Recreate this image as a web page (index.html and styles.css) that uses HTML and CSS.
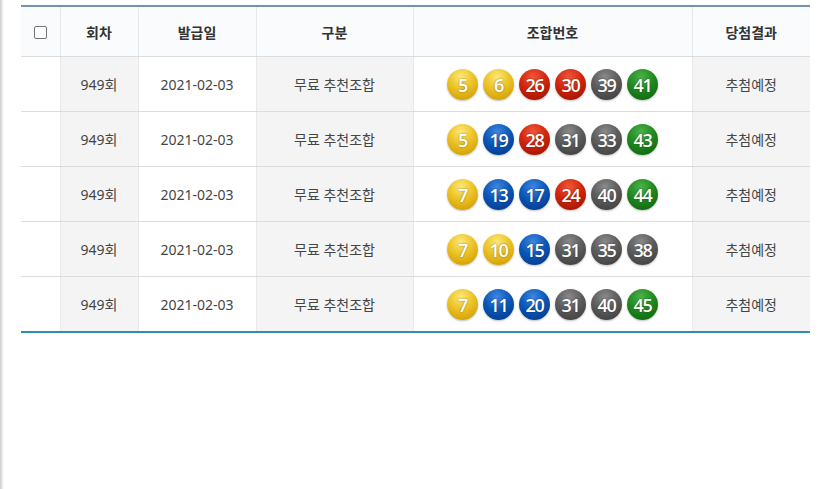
FILE: index.html
```html
<!DOCTYPE html>
<html lang="ko">
<head>
<meta charset="utf-8">
<link rel="stylesheet" href="styles.css">
</head>
<body>
<div class="frame">
  <table class="lotto">
    <colgroup>
      <col class="c-chk"><col class="c-round"><col class="c-date"><col class="c-type"><col class="c-nums"><col class="c-res">
    </colgroup>
    <thead>
      <tr>
        <th><span class="chk"></span></th>
        <th>회차</th>
        <th>발급일</th>
        <th>구분</th>
        <th>조합번호</th>
        <th>당첨결과</th>
      </tr>
    </thead>
    <tbody>
      <tr>
        <td></td><td class="g">949회</td><td>2021-02-03</td><td class="g">무료 추천조합</td>
        <td><div class="balls"><span class="ball y">5</span><span class="ball y">6</span><span class="ball r">26</span><span class="ball r">30</span><span class="ball k">39</span><span class="ball n">41</span></div></td>
        <td class="g">추첨예정</td>
      </tr>
      <tr>
        <td></td><td class="g">949회</td><td>2021-02-03</td><td class="g">무료 추천조합</td>
        <td><div class="balls"><span class="ball y">5</span><span class="ball b">19</span><span class="ball r">28</span><span class="ball k">31</span><span class="ball k">33</span><span class="ball n">43</span></div></td>
        <td class="g">추첨예정</td>
      </tr>
      <tr>
        <td></td><td class="g">949회</td><td>2021-02-03</td><td class="g">무료 추천조합</td>
        <td><div class="balls"><span class="ball y">7</span><span class="ball b">13</span><span class="ball b">17</span><span class="ball r">24</span><span class="ball k">40</span><span class="ball n">44</span></div></td>
        <td class="g">추첨예정</td>
      </tr>
      <tr>
        <td></td><td class="g">949회</td><td>2021-02-03</td><td class="g">무료 추천조합</td>
        <td><div class="balls"><span class="ball y">7</span><span class="ball y">10</span><span class="ball b">15</span><span class="ball k">31</span><span class="ball k">35</span><span class="ball k">38</span></div></td>
        <td class="g">추첨예정</td>
      </tr>
      <tr>
        <td></td><td class="g">949회</td><td>2021-02-03</td><td class="g">무료 추천조합</td>
        <td><div class="balls"><span class="ball y">7</span><span class="ball b">11</span><span class="ball b">20</span><span class="ball k">31</span><span class="ball k">40</span><span class="ball n">45</span></div></td>
        <td class="g">추첨예정</td>
      </tr>
    </tbody>
  </table>
</div>
</body>
</html>
```
FILE: styles.css
```css
html, body {
  margin: 0;
  padding: 0;
  height: 100%;
}
body {
  background: linear-gradient(to right, #cfcfcf 0, #e4e4e4 2px, #f6f6f6 3px, #ffffff 4px);
  font-family: "Noto Sans", "Noto Sans CJK KR", sans-serif;
  color: #444;
}
.frame {
  padding: 5px 17px 0 21px;
}
.lotto {
  width: 789px;
  border-collapse: collapse;
  table-layout: fixed;
  border-top: 2px solid #7491b1;
  border-bottom: 2px solid #2f8db5;
  font-size: 14px;
}
.c-chk { width: 39px; }
.c-round { width: 78px; }
.c-date { width: 118px; }
.c-type { width: 157px; }
.c-nums { width: 279px; }
.c-res { width: 118px; }

.lotto th {
  height: 49px;
  padding: 0;
  background: #f9fbfd;
  color: #333;
  font-weight: 700;
  font-family: "Noto Sans CJK KR", sans-serif;
  text-align: center;
  border-left: 1px solid #e6e9ec;
  border-bottom: 1px solid #dcdcdc;
}
.lotto th:first-child { border-left: none; }
.lotto td {
  height: 54px;
  padding: 0;
  text-align: center;
  border-left: 1px solid #e9e9e9;
  border-bottom: 1px solid #dcdcdc;
  background: #fff;
  color: #454545;
}
.lotto td:first-child { border-left: none; }
.lotto td.g { background: #f4f4f4; }

.chk {
  display: inline-block;
  width: 11px;
  height: 11px;
  border: 1px solid #767676;
  border-radius: 2px;
  background: #fff;
  vertical-align: middle;
  position: relative;
  top: -1px;
}

.balls {
  display: flex;
  justify-content: center;
  gap: 5px;
  padding-top: 1px;
}
.ball {
  width: 31px;
  height: 31px;
  border-radius: 50%;
  display: flex;
  align-items: center;
  justify-content: center;
  color: #fff;
  font-family: "Open Sans", "Liberation Sans", sans-serif;
  font-weight: 600;
  font-size: 18px;
  letter-spacing: -1.2px;
  text-shadow: 0 0 2px rgba(0,0,0,0.45);
  box-shadow: 0 1px 2px rgba(0,0,0,0.25);
}
.ball.y { background: radial-gradient(circle at 45% 25%, #fbe97a 0, #eec52a 40%, #d9a80c 75%, #b98a05 100%); }
.ball.b { background: radial-gradient(circle at 45% 25%, #3f86e0 0, #0b57b8 45%, #063f95 80%, #042f74 100%); }
.ball.r { background: radial-gradient(circle at 45% 25%, #f0573a 0, #d2260c 45%, #ab1604 80%, #840e00 100%); }
.ball.k { background: radial-gradient(circle at 45% 25%, #8a8a8a 0, #5c5c5c 45%, #454545 80%, #2f2f2f 100%); }
.ball.n { background: radial-gradient(circle at 45% 25%, #4cb14a 0, #1f8a1f 45%, #136d13 80%, #0b520b 100%); }
```
